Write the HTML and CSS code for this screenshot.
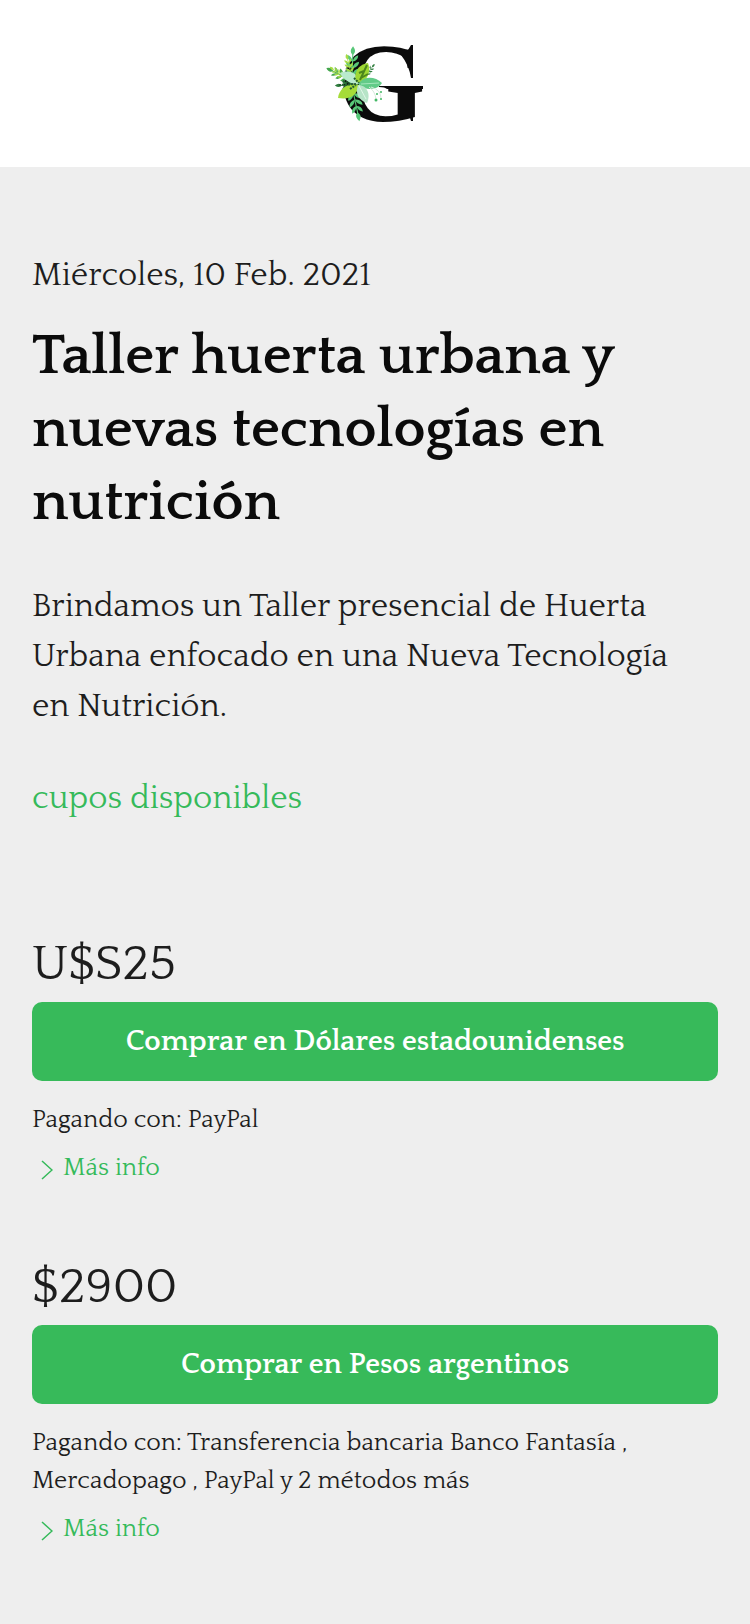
FILE: index.html
```html
<!DOCTYPE html>
<html lang="es">
  <head>
    <meta charset="UTF-8" />
    <meta name="viewport" content="width=device-width, initial-scale=1.0" />
    <title>Taller huerta urbana y nuevas tecnologías en nutrición</title>
    <link rel="stylesheet" href="styles.css">
  </head>
  <body>
    <header class="header">
      <a class="logo" href="#" aria-label="Inicio">
        <svg width="120" height="135" viewBox="0 -20 120 135" aria-hidden="true">
          <defs>
            <g id="sprig">
              <path d="M0 0V-26" fill="none" stroke="currentColor" stroke-width="1" />
              <path d="M0 -2Q-6 -3 -6 -8Q-1 -7 0 -2ZM0 -2Q6 -3 6 -8Q1 -7 0 -2ZM0 -8Q-6 -9 -6 -14Q-1 -13 0 -8ZM0 -8Q6 -9 6 -14Q1 -13 0 -8ZM0 -14Q-5 -15 -5 -20Q-1 -19 0 -14ZM0 -14Q5 -15 5 -20Q1 -19 0 -14ZM0 -20Q-4 -23 0 -28Q4 -23 0 -20Z" fill="currentColor" />
            </g>
          </defs>
          <text class="logo-letter" x="23" y="86">G</text>
          <!-- spur and bar -->
          <path d="M96 10H98V43H96Q94 30 86 20Q92 18 96 10ZM64 51H108V54H72Q70 52 64 52ZM90 80Q95 80 96 86H98V76H90Z" fill="#0b0b0b" />
          <!-- sprigs -->
          <use href="#sprig" class="leaf-green" transform="translate(37 42) rotate(2) scale(1.1)" />
          <use href="#sprig" class="leaf-lime" transform="translate(36 38) rotate(-14) scale(.7)" />
          <use href="#sprig" class="leaf-mid" transform="translate(34 44) rotate(-64) scale(.9)" />
          <use href="#sprig" class="leaf-lime" transform="translate(28 42) rotate(-52) scale(.6)" />
          <use href="#sprig" class="leaf-dark" transform="translate(45 50) rotate(-91) scale(.85 .9)" />
          <use href="#sprig" class="leaf-green" transform="translate(38 56) rotate(168) scale(1.1)" />
          <use href="#sprig" class="leaf-dark" transform="translate(51 40) rotate(38) scale(.5)" />
          <!-- petals -->
          <path d="M44 49C37 50 28 45 25 38C34 34 44 39 46 47Z" fill="#b9ebcd" />
          <path d="M41 47C38 36 45 29 53 28C56 36 53 44 46 48Z" fill="#9fd834" />
          <path d="M45 45L52 30M44 38L49 36M46 43L53 39" fill="none" stroke="#4c861d" stroke-width="2" />
          <path d="M44 50C34 47 24 53 23 63C34 65 42 61 44 50Z" fill="#a5dc38" />
          <path d="M44 48C49 41 60 41 67 48C63 55 51 56 44 50Z" fill="#62cb88" />
          <path d="M46 49L64 48" fill="none" stroke="#a5e8bd" stroke-width="1" />
          <path d="M43 50C52 50 56 59 52 68C43 65 40 58 43 50Z" fill="#b6e4c7" />
          <path d="M44 51L51 64" fill="none" stroke="#e0f6e8" stroke-width="1" />
          <path d="M24 50L42 49M28 46L34 48M35 54L41 50M39 43L44 48" fill="none" stroke="#255f31" stroke-width="2" stroke-dasharray="2 1" />
          <path d="M54 52Q60 56 61 64M56 52Q66 55 66 63" fill="none" stroke="#d7eadc" stroke-width="1" />
          <g fill="#43b865">
            <circle cx="61" cy="65" r="1.5" />
            <circle cx="66" cy="64" r="1" />
            <circle cx="62" cy="59" r="1" />
            <circle cx="66" cy="57" r="1" />
          </g>
        </svg>
      </a>
    </header>
    <main class="content">
      <p class="date">Miércoles, 10 Feb. 2021</p>
      <h1 class="title">Taller huerta urbana y nuevas tecnologías en nutrición</h1>
      <p class="description">Brindamos un Taller presencial de Huerta Urbana enfocado en una Nueva Tecnología en Nutrición.</p>
      <p class="availability">cupos disponibles</p>

      <section class="offer">
        <p class="price">U$S25</p>
        <button class="button" type="button">Comprar en Dólares estadounidenses</button>
        <p class="payment">Pagando con: PayPal</p>
        <a class="more" href="#">
          <svg class="chevron" width="12" height="20" viewBox="0 0 12 20" aria-hidden="true"><path d="M1 1L11 10L1 19" /></svg>
          Más info
        </a>
      </section>

      <section class="offer">
        <p class="price">$2900</p>
        <button class="button" type="button">Comprar en Pesos argentinos</button>
        <p class="payment">Pagando con: Transferencia bancaria Banco Fantasía , Mercadopago , PayPal y 2 métodos más</p>
        <a class="more" href="#">
          <svg class="chevron" width="12" height="20" viewBox="0 0 12 20" aria-hidden="true"><path d="M1 1L11 10L1 19" /></svg>
          Más info
        </a>
      </section>
    </main>
  </body>
</html>
```
FILE: styles.css
```css
* {
  box-sizing: border-box;
}
body {
  margin: 0;
  background-color: #eee;
  color: #1d1d1d;
  font-family: Quattrocento, "Liberation Serif", serif;
  font-size: 33px;
  line-height: 50px;
}
p,
h1 {
  margin: 0;
}
.header {
  display: flex;
  justify-content: center;
  padding: 15px 32px 17px;
  background-color: #fff;
}
.logo {
  display: flex;
}
.logo-letter {
  fill: #0b0b0b;
  font-family: "Liberation Serif", serif;
  font-size: 112px;
  font-weight: bold;
  line-height: 1;
}
.leaf-green {
  color: #58c778;
}
.leaf-mid {
  color: #43a64c;
}
.leaf-lime {
  color: #a8dc45;
}
.leaf-dark {
  color: #2f7d3e;
}
.content {
  padding: 84px 32px 64px;
}
.title {
  margin-top: 19px;
  color: #0b0b0b;
  font-size: 57px;
  line-height: 73px;
}
.description {
  margin-top: 43px;
  padding-right: 16px;
}
.availability {
  margin-top: 42px;
  color: #35ba5a;
}
.offer {
  margin-top: 71px;
}
.availability + .offer {
  margin-top: 111px;
}
.price {
  font-size: 50px;
  line-height: 60px;
  margin-bottom: 7px;
}
.button {
  display: block;
  width: 100%;
  padding: 20px 16px;
  border: none;
  border-radius: 10px;
  background-color: #37ba5a;
  color: #fff;
  font-family: inherit;
  font-size: 29px;
  font-weight: bold;
  line-height: 39px;
  cursor: pointer;
}
.button:hover {
  background-color: #2fa64f;
}
.payment {
  margin-top: 20px;
  font-size: 25px;
  line-height: 38px;
}
.more {
  display: flex;
  align-items: center;
  gap: 10px;
  width: fit-content;
  margin-top: 10px;
  padding-left: 9px;
  color: #35ba5a;
  font-size: 25px;
  line-height: 38px;
  text-decoration: none;
}
.chevron {
  margin-top: 4px;
  fill: none;
  stroke: currentColor;
  stroke-width: 1.5;
}
```
